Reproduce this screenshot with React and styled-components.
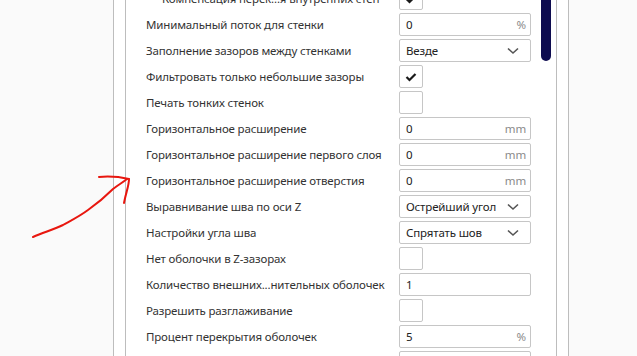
import React from "react";
import styled, { createGlobalStyle } from "styled-components";

const GlobalStyle = createGlobalStyle`
  html, body {
    margin: 0;
    padding: 0;
    background: #fafafa;
  }
  body {
    font-family: "Noto Sans", "Open Sans", sans-serif;
  }
`;

const rows = [
  { label: "Компенсация перек...я внутренних стен", type: "check", checked: true, indent: true },
  { label: "Минимальный поток для стенки", type: "input", value: "0", unit: "%" },
  { label: "Заполнение зазоров между стенками", type: "select", value: "Везде" },
  { label: "Фильтровать только небольшие зазоры", type: "check", checked: true },
  { label: "Печать тонких стенок", type: "check" },
  { label: "Горизонтальное расширение", type: "input", value: "0", unit: "mm" },
  { label: "Горизонтальное расширение первого слоя", type: "input", value: "0", unit: "mm" },
  { label: "Горизонтальное расширение отверстия", type: "input", value: "0", unit: "mm" },
  { label: "Выравнивание шва по оси Z", type: "select", value: "Острейший угол" },
  { label: "Настройки угла шва", type: "select", value: "Спрятать шов" },
  { label: "Нет оболочки в Z-зазорах", type: "check" },
  { label: "Количество внешних...нительных оболочек", type: "input", value: "1", unit: "" },
  { label: "Разрешить разглаживание", type: "check" },
  { label: "Процент перекрытия оболочек", type: "input", value: "5", unit: "%" },
  { label: "", type: "input", value: "", unit: "" },
];

const Chevron = () => (
  <svg width="12" height="8" viewBox="0 0 12 8">
    <path d="M1 1.5 L6 6 L11 1.5" fill="none" stroke="#555" strokeWidth="1.6" />
  </svg>
);

const Tick = () => (
  <svg width="12" height="10" viewBox="0 0 12 10">
    <path d="M1.5 5 L4.5 8 L10.5 2" fill="none" stroke="#1a1a1a" strokeWidth="2.2" />
  </svg>
);

const App = () => {
  return (
    <>
      <GlobalStyle />
      <Page>
        <Gutter />
        <OuterPanel>
          <InnerPanel>
            <SettingsList>
              {rows.map((row, index) => (
                <Row key={index}>
                  <Label $indent={row.indent}>{row.label}</Label>
                  {row.type === "check" && (
                    <CheckBox>{row.checked && <Tick />}</CheckBox>
                  )}
                  {row.type === "input" && (
                    <Field>
                      <span>{row.value}</span>
                      <Unit>{row.unit}</Unit>
                    </Field>
                  )}
                  {row.type === "select" && (
                    <Field>
                      <span>{row.value}</span>
                      <ChevronWrap>
                        <Chevron />
                      </ChevronWrap>
                    </Field>
                  )}
                </Row>
              ))}
            </SettingsList>
            <ScrollThumb />
          </InnerPanel>
        </OuterPanel>
        <Annotation width="637" height="356" viewBox="0 0 637 356">
          <path
            d="M33 237 C45 232 55 229 63 225 C72 220 80 216 88 210 C98 203 106 196 113 189 C118 185 122 183 127 179"
            fill="none"
            stroke="#e8170f"
            strokeWidth="2"
            strokeLinecap="round"
          />
          <path
            d="M99 177 C110 176 120 177 129 179 C129 186 126 192 124 203"
            fill="none"
            stroke="#e8170f"
            strokeWidth="2"
            strokeLinecap="round"
          />
        </Annotation>
      </Page>
    </>
  );
};
export default App;

const Page = styled.div`
  position: relative;
  display: flex;
  width: 637px;
  height: 356px;
  overflow: hidden;
  background: #fafafa;
`;

const Gutter = styled.div`
  width: 113px;
  flex-shrink: 0;
`;

const OuterPanel = styled.div`
  width: 432px;
  flex-shrink: 0;
  display: flex;
  padding: 0 11px;
  background: #fff;
  border-left: 1px solid #bdbdbd;
  border-right: 1px solid #bdbdbd;
`;

const InnerPanel = styled.div`
  position: relative;
  flex: 1;
  overflow: hidden;
  background: #fff;
  border-left: 1px solid #bdbdbd;
  border-right: 1px solid #bdbdbd;
`;

const SettingsList = styled.div`
  display: flex;
  flex-direction: column;
  gap: 3px;
  margin-top: -13px;
  padding-left: 20px;
`;

const Row = styled.div`
  display: grid;
  grid-template-columns: 253px 132px;
  align-items: center;
  height: 23px;
`;

const Label = styled.div`
  padding-left: ${(p) => (p.$indent ? "16px" : "0")};
  font-size: 11.5px;
  letter-spacing: -0.15px;
  color: #333;
  white-space: nowrap;
`;

const CheckBox = styled.div`
  width: 22px;
  height: 21px;
  border: 1px solid #c6c6c6;
  border-radius: 2px;
  background: #fff;
  display: flex;
  align-items: center;
  justify-content: center;
`;

const Field = styled.div`
  box-sizing: border-box;
  height: 23px;
  border: 1px solid #c6c6c6;
  border-radius: 2px;
  background: #fff;
  display: flex;
  align-items: center;
  justify-content: space-between;
  padding: 0 4px 0 6px;
  font-size: 11.5px;
  letter-spacing: -0.15px;
  color: #222;
`;

const Unit = styled.span`
  color: #8a8a8a;
`;

const ChevronWrap = styled.span`
  display: flex;
  padding-right: 7px;
`;

const ScrollThumb = styled.div`
  position: absolute;
  top: -10px;
  right: 5px;
  width: 10px;
  height: 71px;
  border-radius: 5px;
  background: #0d0b4f;
`;

const Annotation = styled.svg`
  position: absolute;
  top: 0;
  left: 0;
  pointer-events: none;
`;
